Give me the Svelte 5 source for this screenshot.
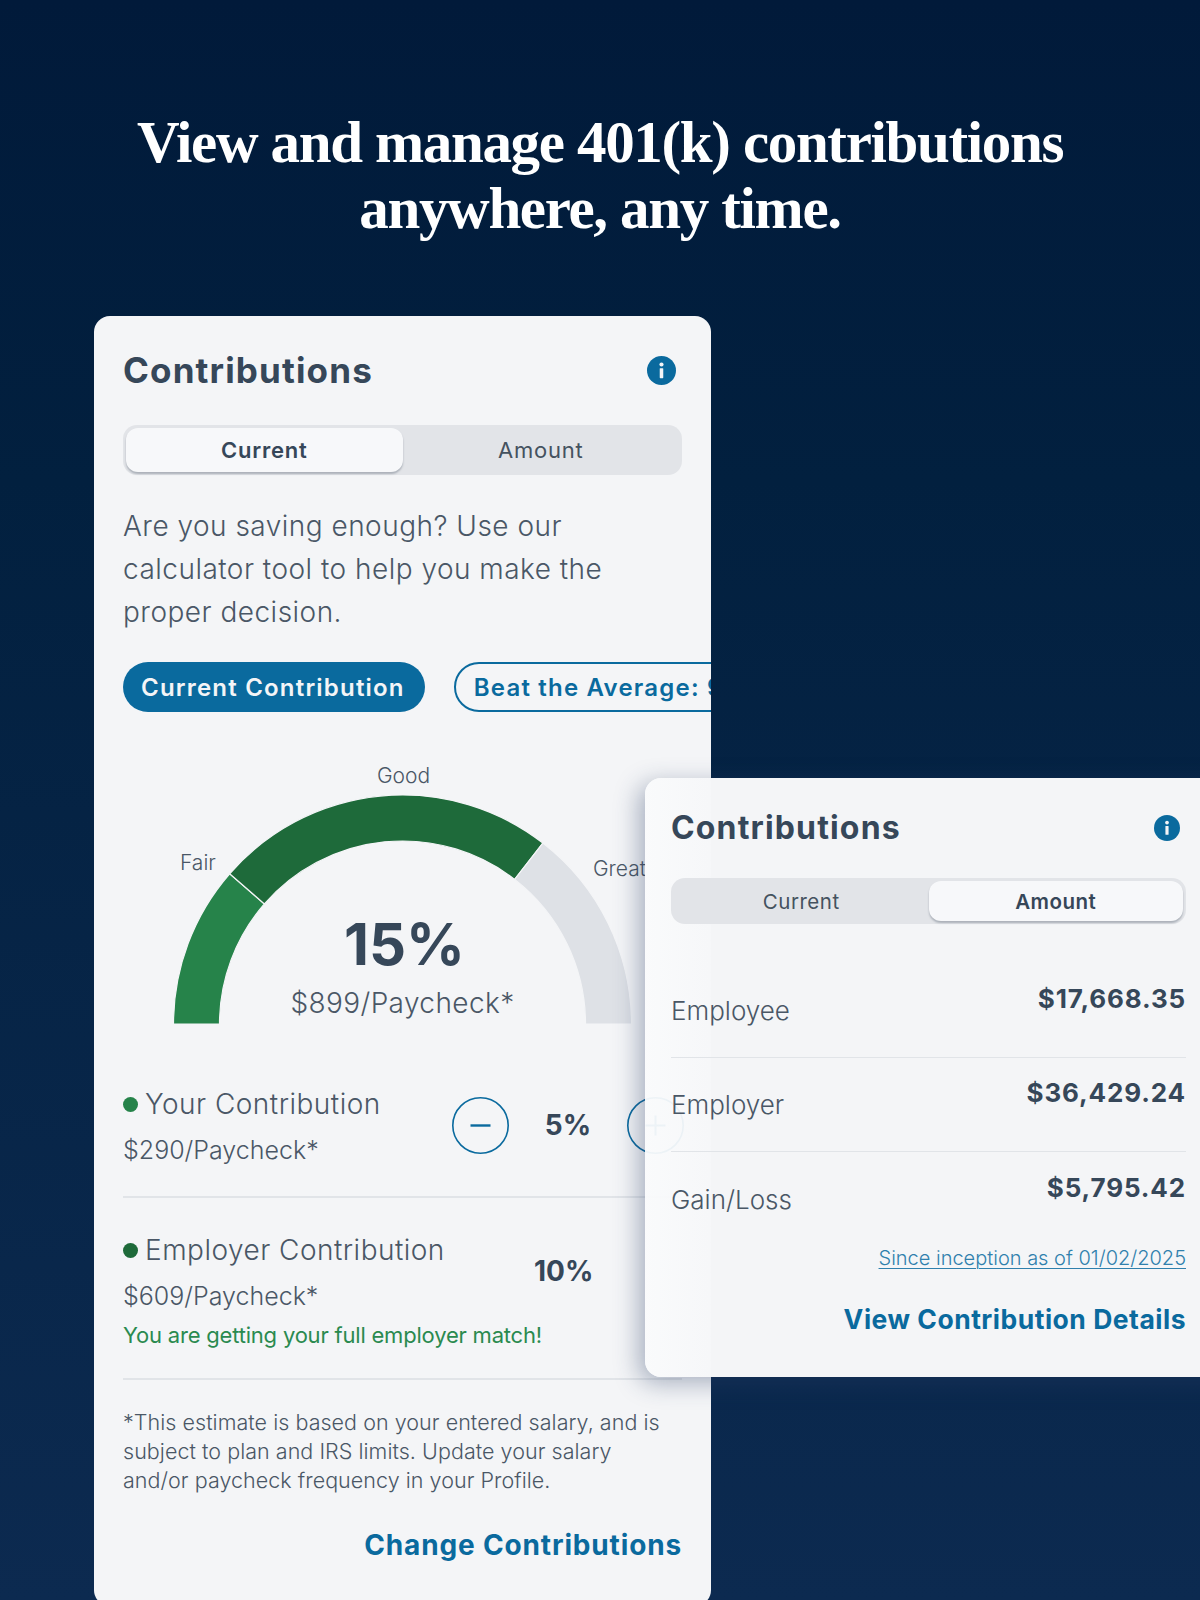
<script>
  const cx = 308.5, cy = 312, R = 229, r = 183;
  const pt = (rad, deg) => {
    const a = (deg * Math.PI) / 180;
    return `${(cx - rad * Math.cos(a)).toFixed(2)} ${(cy - rad * Math.sin(a)).toFixed(2)}`;
  };
  const arc = (a0, a1) =>
    `M${pt(R, a0)} A${R} ${R} 0 0 1 ${pt(R, a1)} L${pt(r, a1)} A${r} ${r} 0 0 0 ${pt(r, a0)} Z`;
  const segments = [
    { d: arc(0, 41), fill: '#26834a' },
    { d: arc(41, 127.8), fill: '#1e6a3a' },
    { d: arc(127.8, 180), fill: '#dee1e6' }
  ];
  const amounts = [
    { label: 'Employee', value: '$17,668.35' },
    { label: 'Employer', value: '$36,429.24' },
    { label: 'Gain/Loss', value: '$5,795.42' }
  ];
</script>

{#snippet info(size)}
  <svg class="info" width={size} height={size} viewBox="0 0 28 28" aria-hidden="true">
    <circle cx="14" cy="14" r="14" fill="#0a6a9e" />
    <circle cx="14" cy="8.2" r="2" fill="#f4f5f7" />
    <rect x="12.3" y="11.8" width="3.4" height="9.6" rx="0.6" fill="#f4f5f7" />
  </svg>
{/snippet}

<main class="page">
  <h1>View and manage 401(k) contributions<br />anywhere, any time.</h1>

  <section class="card main-card">
    <header class="head">
      <h2>Contributions</h2>
      {@render info(29)}
    </header>

    <div class="seg">
      <span class="tab on">Current</span>
      <span class="tab">Amount</span>
    </div>

    <p class="intro">Are you saving enough? Use our calculator tool to help you make the proper decision.</p>

    <div class="pills">
      <span class="pill solid">Current Contribution</span>
      <span class="pill outline">Beat the Average: 9%</span>
    </div>

    <div class="gauge">
      <svg width="617" height="371" viewBox="0 0 617 371" aria-hidden="true">
        {#each segments as s}
          <path d={s.d} fill={s.fill} stroke="#f4f5f7" stroke-width="1.2" />
        {/each}
      </svg>
      <span class="mark good">Good</span>
      <span class="mark fair">Fair</span>
      <span class="mark great">Great</span>
      <div class="big">15%</div>
      <div class="per">$899/Paycheck*</div>
    </div>

    <div class="row you">
      <div class="col">
        <div class="name"><i class="dot light"></i>Your Contribution</div>
        <div class="sub">$290/Paycheck*</div>
      </div>
      <div class="ctrl">
        <svg width="57" height="57" viewBox="0 0 57 57" aria-hidden="true">
          <circle cx="28.5" cy="28.5" r="27.7" fill="none" stroke="#0a6a9e" stroke-width="1.6" />
          <path d="M18.5 28.5h20" stroke="#0a6a9e" stroke-width="2.4" />
        </svg>
        <b class="pct">5%</b>
        <svg width="57" height="57" viewBox="0 0 57 57" aria-hidden="true">
          <circle cx="28.5" cy="28.5" r="27.7" fill="none" stroke="#0a6a9e" stroke-width="1.6" />
          <path d="M18.5 28.5h20M28.5 18.5v20" stroke="#0a6a9e" stroke-width="2" />
        </svg>
      </div>
    </div>

    <div class="row boss">
      <div class="col">
        <div class="name"><i class="dot dark"></i>Employer Contribution</div>
        <div class="sub">$609/Paycheck*</div>
        <div class="match">You are getting your full employer match!</div>
      </div>
      <b class="pct ten">10%</b>
    </div>

    <p class="fine">*This estimate is based on your entered salary, and is subject to plan and IRS limits. Update your salary and/or paycheck frequency in your Profile.</p>

    <div class="action">Change Contributions</div>
  </section>

  <section class="card float-card">
    <header class="head">
      <h2>Contributions</h2>
      {@render info(26)}
    </header>

    <div class="seg">
      <span class="tab">Current</span>
      <span class="tab on">Amount</span>
    </div>

    <div class="rows">
      {#each amounts as a}
        <div class="amt">
          <span class="lab">{a.label}</span>
          <b class="val">{a.value}</b>
        </div>
      {/each}
    </div>

    <div class="since"><span>Since inception as of 01/02/2025</span></div>
    <div class="action">View Contribution Details</div>
  </section>
</main>

<style>
  :global(body) {
    margin: 0;
  }
  .page {
    position: relative;
    width: 1200px;
    height: 1600px;
    overflow: hidden;
    background: linear-gradient(180deg, #011a3a 0%, #02203f 30%, #0c2a50 100%);
    font-family: Inter, 'Noto Sans', sans-serif;
    color: #364759;
  }
  h1 {
    margin: 0;
    padding-top: 109px;
    height: 206px;
    box-sizing: border-box;
    text-align: center;
    font: 700 59px/66px 'Liberation Serif', serif;
    letter-spacing: -1.35px;
    color: #fff;
  }
  .card {
    box-sizing: border-box;
    background: #f4f5f7;
    border-radius: 16px;
  }
  .main-card {
    width: 617px;
    height: 1290px;
    margin: 110px 0 0 94px;
    padding: 34px 29px 0;
    overflow: hidden;
  }
  .head {
    display: flex;
    align-items: center;
    justify-content: space-between;
    height: 40px;
  }
  h2 {
    margin: 0;
    font-size: 35px;
    line-height: 40px;
    letter-spacing: 1.15px;
    font-weight: 700;
    color: #364759;
  }
  .main-card .info {
    margin-right: 6px;
  }
  .seg {
    display: grid;
    grid-template-columns: 1fr 1fr;
    height: 50px;
    margin-top: 35px;
    padding: 3px;
    box-sizing: border-box;
    background: #e2e4e8;
    border-radius: 14px;
  }
  .tab {
    display: flex;
    align-items: center;
    justify-content: center;
    font-size: 22px;
    letter-spacing: 0.8px;
    font-weight: 400;
    color: #45525f;
    border-radius: 12px;
  }
  .tab.on {
    background: #f7f8fa;
    font-weight: 600;
    color: #364759;
    box-shadow: 0 2px 2px rgba(90, 100, 115, 0.4);
  }
  .intro {
    margin: 30px 0 0;
    font-size: 28px;
    line-height: 43px;
    letter-spacing: 0.48px;
    font-weight: 300;
    color: #4a5766;
    width: 520px;
  }
  .pills {
    display: flex;
    gap: 29px;
    margin-top: 28px;
    width: 900px;
  }
  .pill {
    display: flex;
    align-items: center;
    box-sizing: border-box;
    height: 50px;
    padding: 1px 20px 0 18px;
    border-radius: 25px;
    font-size: 24px;
    letter-spacing: 1.2px;
    font-weight: 600;
    white-space: nowrap;
  }
  .solid {
    background: #0a6a9e;
    color: #f4f5f7;
  }
  .outline {
    border: 2px solid #0a6a9e;
    color: #0a6a9e;
  }
  .gauge {
    position: relative;
    width: 617px;
    height: 371px;
    margin-left: -29px;
  }
  .gauge svg {
    display: block;
  }
  .mark {
    position: absolute;
    font-size: 21px;
    line-height: 26px;
    font-weight: 300;
    color: #4a5766;
  }
  .good {
    left: 283px;
    top: 51px;
  }
  .fair {
    left: 86px;
    top: 138px;
  }
  .great {
    left: 499px;
    top: 144px;
  }
  .big,
  .per {
    position: absolute;
    left: 2px;
    width: 617px;
    text-align: center;
  }
  .big {
    top: 197px;
    font-size: 58px;
    line-height: 70px;
    font-weight: 700;
  }
  .per {
    left: 0;
    top: 271px;
    font-size: 28px;
    line-height: 40px;
    letter-spacing: 0.4px;
    font-weight: 300;
    color: #4a5766;
  }
  .row {
    display: flex;
    align-items: flex-start;
    width: 559px;
    box-sizing: border-box;
    border-bottom: 2px solid #e1e4e8;
  }
  .you {
    height: 115px;
  }
  .boss {
    height: 182px;
    padding-top: 31px;
  }
  .col {
    flex: none;
  }
  .you .col {
    width: 329px;
  }
  .boss .col {
    width: 411px;
  }
  .name {
    display: flex;
    align-items: center;
    height: 42px;
    font-size: 28px;
    letter-spacing: 0.48px;
    font-weight: 300;
    color: #4a5766;
    white-space: nowrap;
  }
  .dot {
    flex: none;
    width: 15px;
    height: 15px;
    margin-right: 7px;
    border-radius: 50%;
  }
  .light {
    background: #26834a;
  }
  .dark {
    background: #1e6a3a;
  }
  .sub {
    margin-top: 7px;
    font-size: 25px;
    line-height: 36px;
    font-weight: 300;
    color: #4a5766;
    white-space: nowrap;
  }
  .match {
    margin-top: 6px;
    font-size: 22px;
    line-height: 30px;
    letter-spacing: -0.2px;
    font-weight: 400;
    color: #2a8a4f;
    white-space: nowrap;
  }
  .ctrl {
    display: flex;
    align-items: center;
    justify-content: space-between;
    flex: none;
    width: 232px;
    margin-top: 14px;
  }
  .pct {
    font-size: 28px;
    font-weight: 700;
    line-height: 57px;
  }
  .ten {
    margin-top: 14px;
  }
  .fine {
    margin: 28px 0 0;
    width: 545px;
    font-size: 21.5px;
    line-height: 29px;
    letter-spacing: 0.04px;
    font-weight: 300;
    color: #4a5766;
  }
  .action {
    margin-top: 30px;
    text-align: right;
    font-size: 28px;
    line-height: 40px;
    letter-spacing: 0.85px;
    font-weight: 700;
    color: #0a6a9e;
    white-space: nowrap;
  }
  .float-card {
    position: absolute;
    left: 645px;
    top: 778px;
    width: 600px;
    height: 599px;
    padding: 30px 59px 0 26px;
    background: linear-gradient(90deg, rgba(250, 251, 252, 0.95) 0, rgba(246, 247, 249, 0.94) 66px, #f4f5f7 66px);
    box-shadow: -6px 6px 24px rgba(40, 60, 100, 0.38);
  }
  .float-card h2 {
    font-size: 32px;
    letter-spacing: 1.15px;
  }
  .float-card .info {
    margin-right: 6px;
  }
  .float-card .seg {
    height: 46px;
    margin-top: 30px;
  }
  .float-card .tab {
    font-size: 20.5px;
    letter-spacing: 0.5px;
  }
  .rows {
    margin-top: 40px;
  }
  .amt {
    display: flex;
    align-items: center;
    justify-content: space-between;
    height: 94px;
    box-sizing: border-box;
    border-bottom: 1.5px solid #e1e4e8;
  }
  .amt:last-child {
    border-bottom: 0;
  }
  .lab {
    font-size: 26px;
    font-weight: 300;
    color: #4a5766;
  }
  .val {
    padding-bottom: 24px;
    font-size: 26px;
    letter-spacing: 0.85px;
    font-weight: 700;
  }
  .since {
    margin-top: -1px;
    text-align: right;
    font-size: 20px;
    line-height: 26px;
    font-weight: 300;
    color: #2f80ad;
  }
  .since span {
    text-decoration: underline;
    text-underline-offset: 3px;
    text-decoration-thickness: 1px;
  }
  .float-card .action {
    margin-top: 28px;
    font-size: 26.5px;
    letter-spacing: 0.5px;
  }
</style>
